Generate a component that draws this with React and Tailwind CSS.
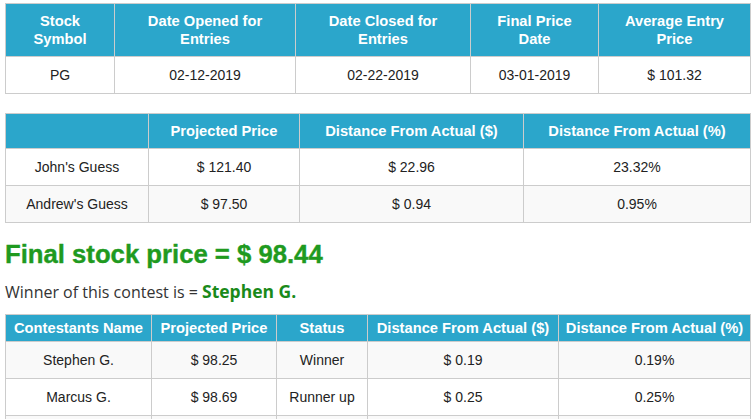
import React from 'react';

const summary = {
  head: [['Stock', 'Symbol'], ['Date Opened for', 'Entries'], ['Date Closed for', 'Entries'], ['Final Price', 'Date'], ['Average Entry', 'Price']],
  widths: [109, 181, 175, 128, 152],
  row: ['PG', '02-12-2019', '02-22-2019', '03-01-2019', '$ 101.32'],
};

const guesses = {
  head: ['', 'Projected Price', 'Distance From Actual ($)', 'Distance From Actual (%)'],
  widths: [143, 151, 224, 227],
  rows: [
    ["John's Guess", '$ 121.40', '$ 22.96', '23.32%'],
    ["Andrew's Guess", '$ 97.50', '$ 0.94', '0.95%'],
  ],
};

const contestants = {
  head: ['Contestants Name', 'Projected Price', 'Status', 'Distance From Actual ($)', 'Distance From Actual (%)'],
  widths: [146, 125, 91, 191, 192],
  rows: [
    ['Stephen G.', '$ 98.25', 'Winner', '$ 0.19', '0.19%'],
    ['Marcus G.', '$ 98.69', 'Runner up', '$ 0.25', '0.25%'],
    ['Kevin T.', '$ 99.10', '', '$ 0.66', '0.67%'],
  ],
};

function DataTable({ head, widths, rows, headPad, stripeFirst, className = '' }) {
  return (
    <table className={`ml-[5px] w-[745px] table-fixed border-collapse text-center font-['Liberation_Sans',Arial,sans-serif] text-[14px] ${className}`}>
      <colgroup>
        {widths.map((w, i) => <col key={i} style={{ width: w }} />)}
      </colgroup>
      <thead>
        <tr className="bg-[#2ba6cb] text-white">
          {head.map((h, i) => (
            <th key={i} className={`border border-[#cccccc] px-1 ${headPad} whitespace-nowrap text-[14.7px] font-bold leading-[18px]`}>
              {Array.isArray(h) ? (<>{h[0]}<br />{h[1]}</>) : h}
            </th>
          ))}
        </tr>
      </thead>
      <tbody>
        {rows.map((r, ri) => {
          const striped = stripeFirst ? ri % 2 === 0 : ri % 2 === 1;
          return (
            <tr key={ri} className={striped ? 'bg-[#f9f9f9]' : 'bg-white'}>
              {r.map((c, ci) => (
                <td key={ci} className="border border-[#cccccc] px-2 py-2 leading-[20px] text-[#222222]">{c}</td>
              ))}
            </tr>
          );
        })}
      </tbody>
    </table>
  );
}

export default function App() {
  return (
    <div className="min-h-screen bg-white pt-[3px]">
      <DataTable head={summary.head} widths={summary.widths} rows={[summary.row]} headPad="py-2" />
      <DataTable head={guesses.head} widths={guesses.widths} rows={guesses.rows} headPad="py-2" className="mt-[19px]" />

      <h2 className="ml-[5px] mt-[17px] font-['Liberation_Sans',Arial,sans-serif] text-[25.7px] font-bold leading-[28px] text-[#1f9a1f] [-webkit-text-stroke:0.4px_#1f9a1f]">
        Final stock price = $ 98.44
      </h2>
      <p className="ml-[5px] mt-[11px] font-['Open_Sans',sans-serif] text-[16px] leading-[24px] text-[#333333]">
        Winner of this contest is = <span className="text-[17.5px] font-bold text-[#1a8a1a]">Stephen G.</span>
      </p>

      <DataTable head={contestants.head} widths={contestants.widths} rows={contestants.rows} headPad="py-1" stripeFirst className="mt-[10px]" />
    </div>
  );
}
